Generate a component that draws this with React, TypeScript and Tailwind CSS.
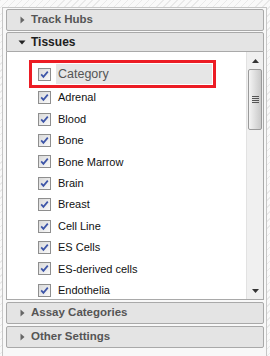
import React from "react";

const tissues = [
  "Adrenal",
  "Blood",
  "Bone",
  "Bone Marrow",
  "Brain",
  "Breast",
  "Cell Line",
  "ES Cells",
  "ES-derived cells",
  "Endothelia",
];

function CheckBox() {
  return (
    <svg width="13" height="13" viewBox="0 0 13 13" className="shrink-0">
      <defs>
        <linearGradient id="cbFill" x1="0" y1="0" x2="1" y2="1">
          <stop offset="0" stopColor="#d8d8d8" />
          <stop offset="1" stopColor="#fbfbfb" />
        </linearGradient>
      </defs>
      <rect x="0.5" y="0.5" width="12" height="12" fill="url(#cbFill)" stroke="#8e8e8e" />
      <path d="M3.2 6.4 L5.4 8.9 L9.8 3.6" fill="none" stroke="#3d55a8" strokeWidth="1.7" />
    </svg>
  );
}

function Header({ title, open = false, first = false }: { title: string; open?: boolean; first?: boolean }) {
  return (
    <div
      className={
        open
          ? "flex items-center h-[20px] pl-[9px] bg-[#e4e4e4] border border-[#a9a9a9] rounded-t-[2px]"
          : first
          ? "flex items-center h-[22px] pl-[9px] mb-[1px] bg-[#e4e4e4] border border-[#a9a9a9] rounded-[2px]"
          : "flex items-center h-[22px] pl-[9px] mb-[2px] bg-[#e4e4e4] border border-[#a9a9a9] rounded-[2px]"
      }
    >
      <span className="w-[12px] flex justify-center items-center mr-[3px]">
        {open ? (
          <svg width="8" height="5" viewBox="0 0 8 5">
            <path d="M0.5 0.5 H7.5 L4 4.5 Z" fill="#222" />
          </svg>
        ) : (
          <svg width="5" height="8" viewBox="0 0 5 8">
            <path d="M0.5 0.5 V7.5 L4.5 4 Z" fill="#666" />
          </svg>
        )}
      </span>
      <span className={open ? "text-[12px] font-bold text-[#1e1e1e]" : "text-[11.5px] font-bold text-[#555]"}>{title}</span>
    </div>
  );
}

function ScrollBar() {
  return (
    <div className="w-[17px] flex flex-col bg-[#f0f0f0] border-l border-[#e2e2e2]">
      <div className="h-[17px] flex items-center justify-center">
        <svg width="7" height="4" viewBox="0 0 7 4">
          <path d="M3.5 0 L7 4 H0 Z" fill="#333" />
        </svg>
      </div>
      <div className="h-[61px] mx-[1px] border border-[#9a9a9a] rounded-[2px] bg-linear-to-r from-[#f4f4f4] to-[#c9c9c9] flex flex-col items-center justify-center gap-[1px]">
        <div className="w-[7px] h-[1px] bg-[#555]" />
        <div className="w-[7px] h-[1px] bg-[#555]" />
        <div className="w-[7px] h-[1px] bg-[#555]" />
        <div className="w-[7px] h-[1px] bg-[#555]" />
      </div>
      <div className="flex-1" />
      <div className="h-[17px] flex items-center justify-center">
        <svg width="7" height="4" viewBox="0 0 7 4">
          <path d="M0 0 H7 L3.5 4 Z" fill="#333" />
        </svg>
      </div>
    </div>
  );
}

export default function App() {
  return (
    <div
      className="w-[270px] h-[356px] overflow-hidden pt-[7px] pl-[2px] pr-[3px] bg-[repeating-linear-gradient(135deg,#e9e9e9_0px,#e9e9e9_1px,#f9f9f9_1px,#f9f9f9_5px)]"
      style={{ fontFamily: '"Liberation Sans", Arial, sans-serif' }}
    >
      <div className="h-full bg-[#f8f8f8] border-l border-t border-r border-[#c6c6c6] pt-[1px] pl-[3px] pr-[2px]">
        <Header title="Track Hubs" first />
        <Header title="Tissues" open />
        <div className="flex h-[248px] mb-[2px] bg-white border-x border-b border-[#a9a9a9]">
          <div className="flex-1 overflow-hidden pt-[8px] pl-[22px]">
            <div className="flex items-center w-[187px] h-[28px] border-[3px] border-[#ec1c24] pl-[6px] pr-[1px] py-[1px]">
              <CheckBox />
              <div className="flex-1 h-full ml-[5px] pl-[2px] bg-[#e6e6e6] flex items-center text-[12.5px] text-[#555]">
                Category
              </div>
            </div>
            <div className="-mt-[1px]">
              {tissues.map((t) => (
                <div key={t} className="flex items-center h-[21.4px] pl-[9px] text-[11px] text-[#111]">
                  <CheckBox />
                  <span className="ml-[7px]">{t}</span>
                </div>
              ))}
            </div>
          </div>
          <ScrollBar />
        </div>
        <Header title="Assay Categories" />
        <Header title="Other Settings" />
      </div>
    </div>
  );
}
